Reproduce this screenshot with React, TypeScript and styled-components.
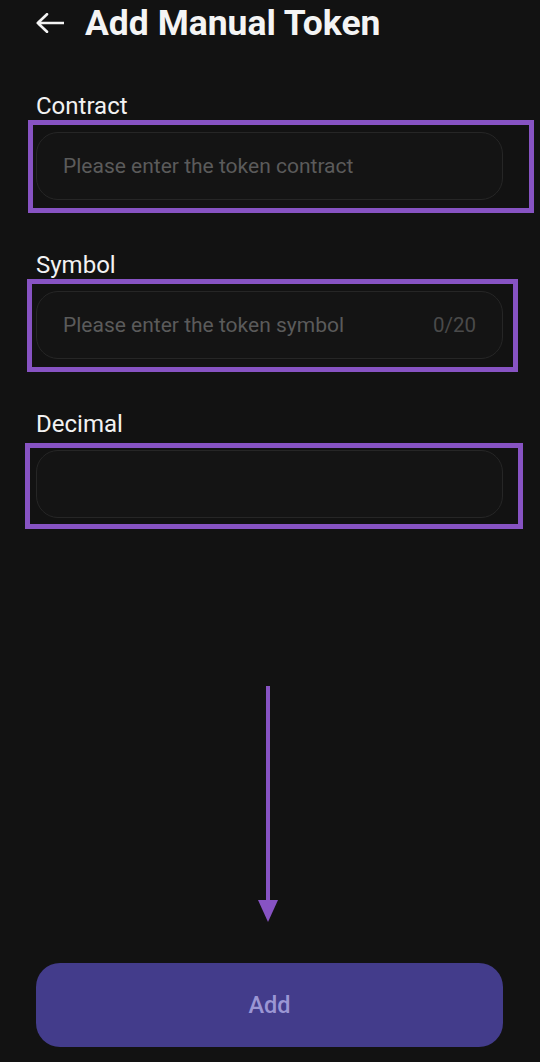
import React from "react";
import styled, { createGlobalStyle } from "styled-components";

const GlobalStyle = createGlobalStyle`
  html, body {
    margin: 0;
    padding: 0;
    background: #121212;
  }
  body {
    font-family: Roboto, "Noto Sans", "Liberation Sans", sans-serif;
    color: #f2f2f2;
  }
  * {
    box-sizing: border-box;
  }
`;

const StPage = styled.div`
  width: 540px;
  min-height: 1062px;
  background: #121212;
  padding: 0 37px 15px 36px;
  display: flex;
  flex-direction: column;
`;

const StHeader = styled.header`
  height: 46px;
  display: flex;
  align-items: center;
  gap: 21px;
`;

const StBackButton = styled.button`
  background: none;
  border: none;
  padding: 0;
  width: 28px;
  height: 20px;
  display: flex;
  align-items: center;
  color: #f4f4f4;
  cursor: pointer;
`;

const StTitle = styled.h1`
  margin: 0;
  font-size: 35.5px;
  font-weight: 700;
  color: #f4f4f4;
`;

const StForm = styled.div`
  display: flex;
  flex-direction: column;
  gap: 52px;
  margin-top: 47px;
`;

const StField = styled.div`
  display: flex;
  flex-direction: column;
  gap: 13px;
`;

const StLabel = styled.label`
  font-size: 24px;
  line-height: 26px;
  color: #f2f2f2;
`;

const StInputWrap = styled.div`
  position: relative;
  height: 68px;
  border: 1.5px solid #262626;
  border-radius: 22px;
  background: #141414;
  display: flex;
  align-items: center;
  padding: 0 26px;
`;

const StInput = styled.input`
  flex: 1;
  min-width: 0;
  background: transparent;
  border: none;
  outline: none;
  font-family: inherit;
  font-size: 21px;
  color: #e0e0e0;
  padding: 0;
  &::placeholder {
    color: #5b5b5b;
  }
`;

const StCounter = styled.span`
  font-size: 20.5px;
  color: #4a4a4a;
`;

const StHighlight = styled.div<{ $t: number; $l: number; $r: number; $b: number }>`
  position: absolute;
  top: ${(p) => p.$t}px;
  left: ${(p) => p.$l}px;
  right: ${(p) => p.$r}px;
  bottom: ${(p) => p.$b}px;
  border: 5px solid #8753c3;
  pointer-events: none;
`;

const StArrowArea = styled.div`
  display: flex;
  justify-content: center;
  margin-top: 168px;
  padding-right: 4px;
`;

const StAddButton = styled.button`
  margin-top: 41px;
  height: 84px;
  width: 100%;
  border: none;
  border-radius: 24px;
  background: #433c8b;
  color: #9b96d4;
  font-family: inherit;
  font-size: 23.5px;
  font-weight: 500;
  cursor: pointer;
`;

type Box = { t: number; l: number; r: number; b: number };

const fields: {
  label: string;
  placeholder: string;
  counter?: string;
  box: Box;
}[] = [
  {
    label: "Contract",
    placeholder: "Please enter the token contract",
    box: { t: -13, l: -9.5, r: -32, b: -14 },
  },
  {
    label: "Symbol",
    placeholder: "Please enter the token symbol",
    counter: "0/20",
    box: { t: -13, l: -10.5, r: -16, b: -14 },
  },
  {
    label: "Decimal",
    placeholder: "",
    box: { t: -8, l: -12.5, r: -21, b: -12 },
  },
];

export default function App() {
  return (
    <>
      <GlobalStyle />
      <StPage>
        <StHeader>
          <StBackButton aria-label="back">
            <svg width="28" height="20" viewBox="0 0 28 20" fill="none">
              <path
                d="M11 1.2 L1.8 10 L11 18.8 M1.8 10 H28"
                stroke="currentColor"
                strokeWidth="2.6"
                strokeLinecap="round"
                strokeLinejoin="round"
              />
            </svg>
          </StBackButton>
          <StTitle>Add Manual Token</StTitle>
        </StHeader>

        <StForm>
          {fields.map((field) => (
            <StField key={field.label}>
              <StLabel>{field.label}</StLabel>
              <StInputWrap>
                <StInput placeholder={field.placeholder} />
                {field.counter && <StCounter>{field.counter}</StCounter>}
                <StHighlight
                  $t={field.box.t}
                  $l={field.box.l}
                  $r={field.box.r}
                  $b={field.box.b}
                />
              </StInputWrap>
            </StField>
          ))}
        </StForm>

        <StArrowArea>
          <svg width="22" height="236" viewBox="0 0 22 236" fill="none">
            <rect x="9" y="0" width="4" height="220" fill="#8753c3" />
            <path d="M1 214 L21 214 L11 236 Z" fill="#8753c3" />
          </svg>
        </StArrowArea>

        <StAddButton>Add</StAddButton>
      </StPage>
    </>
  );
}
